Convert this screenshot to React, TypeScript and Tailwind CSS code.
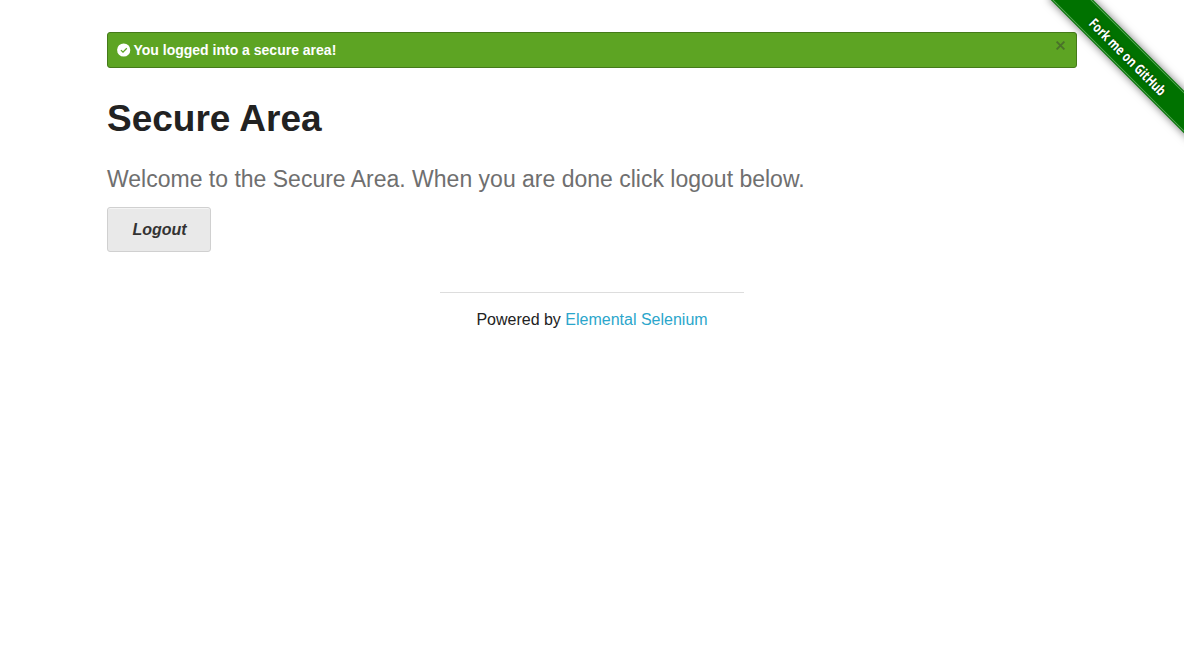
import React from "react";

function CheckMark() {
  return (
    <svg className="block h-[14px] w-[14px]" viewBox="0 0 14 14" aria-hidden="true">
      <circle cx="6.7" cy="7" r="6.6" fill="#fff" />
      <path d="M3.9 7.1 6 9.1 9.8 5.3" fill="none" stroke="#5da423" strokeWidth="1.3" />
    </svg>
  );
}

function ForkRibbon() {
  return (
    <div className="absolute right-0 top-0 h-[149px] w-[149px] overflow-hidden">
      <div className="absolute left-[-5px] top-[43px] flex h-[30px] w-[200px] rotate-45 items-center bg-[#007200] py-px shadow-[0_0_8px_rgba(0,0,0,0.55)]">
        <div className="flex h-full w-full items-center justify-center border-y border-[#59a659] font-['Noto_Sans',sans-serif] text-[14px] font-bold text-white">
          <span className="relative left-[-2px] block scale-x-[0.78] whitespace-nowrap [text-shadow:0_0_3px_rgba(0,0,0,0.5)]">
            Fork me on GitHub
          </span>
        </div>
      </div>
    </div>
  );
}

export default function App() {
  return (
    <div className="relative min-h-[653px] overflow-hidden bg-white font-['Liberation_Sans',Arial,sans-serif] text-[#222]">
      <main className="ml-[107px] w-[970px] pt-8">
        <div className="flex h-9 items-center rounded-[3px] border border-[#457a1a] bg-[#5da423] pl-[9px] pr-[11px] text-white">
          <CheckMark />
          <span className="ml-[2.5px] text-[14px] font-bold leading-[14px]">You logged into a secure area!</span>
          <button className="mb-[9px] ml-auto text-[#333]/45" aria-label="Close">
            <svg className="block h-[9px] w-[9px]" viewBox="0 0 9 9" aria-hidden="true">
              <path d="M0.6 0.6 8.4 8.4M8.4 0.6 0.6 8.4" fill="none" stroke="currentColor" strokeWidth="1.8" />
            </svg>
          </button>
        </div>
        <h1 className="mt-[24px] text-[37px] font-bold leading-[53px]">Secure Area</h1>
        <p className="mt-[18px] text-[23px] leading-[32px] text-[#6f6f6f]">
          Welcome to the Secure Area. When you are done click logout below.
        </p>
        <button className="mt-3 flex h-[45px] w-[104px] items-center justify-center rounded-[3px] border border-[#d0d0d0] bg-[#e9e9e9] pl-px text-[16px] font-bold italic text-[#333] shadow-[0_1px_0_rgba(255,255,255,0.5)_inset]">
          Logout
        </button>
      </main>
      <footer className="mx-auto mt-10 w-[304px] border-t border-[#ddd] pt-[14px] text-center text-[16px] leading-[26px]">
        Powered by <span className="text-[#2ba6cb]">Elemental Selenium</span>
      </footer>
      <ForkRibbon />
    </div>
  );
}
